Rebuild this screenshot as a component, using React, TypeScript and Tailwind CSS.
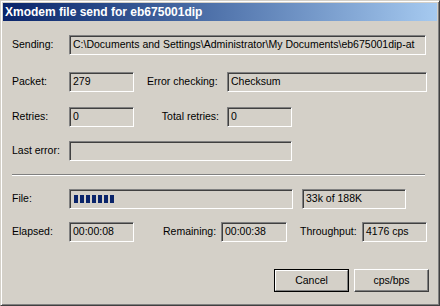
import React from "react";

const font = { fontFamily: '"Liberation Sans", Arial, sans-serif' };

function Field({ w, children }: { w: string; children?: React.ReactNode }) {
  return (
    <div
      className={`${w} h-[20px] shrink-0 border border-t-[#808080] border-l-[#808080] border-b-white border-r-white shadow-[inset_1px_1px_0_#404040,inset_-1px_-1px_0_#d4d0c8] bg-[#d4d0c8] flex items-center pl-[3px] overflow-hidden whitespace-nowrap text-black`}
    >
      {children}
    </div>
  );
}

export default function App() {
  return (
    <div
      className="w-[440px] h-[306px] bg-[#d4d0c8] border border-t-[#d4d0c8] border-l-[#d4d0c8] border-b-[#404040] border-r-[#404040] shadow-[inset_1px_1px_0_#ffffff,inset_-1px_-1px_0_#808080] p-[2px] flex flex-col text-[10.5px] text-black"
      style={font}
    >
      <div className="h-[18px] bg-gradient-to-r from-[#0a246a] to-[#a6caf0] flex items-center pl-[2px] text-white font-bold text-[12px]">
        Xmodem file send for eb675001dip
      </div>
      <div className="flex flex-col pl-[9px]">
        <div className="flex items-center mt-[14px]">
          <div className="w-[57px]">Sending:</div>
          <Field w="w-[357px]">C:\Documents and Settings\Administrator\My Documents\eb675001dip-at</Field>
        </div>
        <div className="flex items-center mt-[17px]">
          <div className="w-[57px]">Packet:</div>
          <Field w="w-[65px]">279</Field>
          <div className="w-[80px] ml-[13px]">Error checking:</div>
          <Field w="w-[200px]">Checksum</Field>
        </div>
        <div className="flex items-center mt-[15px]">
          <div className="w-[57px]">Retries:</div>
          <Field w="w-[65px]">0</Field>
          <div className="w-[93px] text-right pr-[8px]">Total retries:</div>
          <Field w="w-[65px]">0</Field>
        </div>
        <div className="flex items-center mt-[14px]">
          <div className="w-[57px]">Last error:</div>
          <Field w="w-[223px]" />
        </div>
        <div className="mt-[13px] w-[413px] h-[2px] border-t border-t-[#808080] border-b border-b-white" />
        <div className="flex items-center mt-[13px]">
          <div className="w-[57px]">File:</div>
          <Field w="w-[224px]">
            <div className="flex gap-[2px] ml-[1px]">
              {Array.from({ length: 7 }).map((_, i) => (
                <div key={i} className="w-[4px] h-[8px] bg-[#0a246a]" />
              ))}
            </div>
          </Field>
          <div className="ml-[9px]">
            <Field w="w-[104px]">33k of 188K</Field>
          </div>
        </div>
        <div className="flex items-center mt-[13px]">
          <div className="w-[57px]">Elapsed:</div>
          <Field w="w-[65px]">00:00:08</Field>
          <div className="w-[58px] ml-[29px]">Remaining:</div>
          <Field w="w-[66px]">00:00:38</Field>
          <div className="w-[62px] ml-[13px]">Throughput:</div>
          <Field w="w-[65px]">4176 cps</Field>
        </div>
        <div className="flex justify-end mt-[27px] pr-[8px] gap-[5px]">
          <div className="w-[75px] h-[23px] border border-black">
            <div className="w-full h-full border border-t-white border-l-white border-b-[#808080] border-r-[#808080] flex items-center justify-center">
              Cancel
            </div>
          </div>
          <div className="w-[75px] h-[23px] border border-t-white border-l-white border-b-[#404040] border-r-[#404040] shadow-[inset_-1px_-1px_0_#808080] flex items-center justify-center">
            cps/bps
          </div>
        </div>
      </div>
    </div>
  );
}
